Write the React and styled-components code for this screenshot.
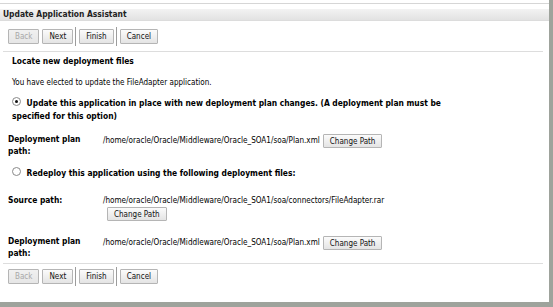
import React from "react";
import styled, { createGlobalStyle } from "styled-components";

const GlobalStyle = createGlobalStyle`
  html, body {
    margin: 0;
    padding: 0;
    background: #ffffff;
  }
  body {
    font-family: "DejaVu Sans Condensed", "Liberation Sans", sans-serif;
    color: #000;
  }
`;

const Frame = styled.div`
  width: 553px;
  height: 307px;
  box-sizing: border-box;
  border-right: 4px solid #9ea39c;
  border-bottom: 5px solid #9ea39c;
  padding-top: 3px;
  overflow: hidden;
`;

const TopRule = styled.div`
  height: 1px;
  background: #d6d6d6;
  margin-bottom: 5px;
`;

const Header = styled.div`
  height: 11px;
  line-height: 11px;
  padding-left: 3px;
  font-size: 8.4px;
  font-weight: bold;
  color: #222;
  background: linear-gradient(#f3f3f3, #e2e2e2);
  border-bottom: 1px solid #dcdcdc;
`;

const ButtonBar = styled.div`
  display: flex;
  align-items: flex-start;
  padding: ${p => p.$pad || "8px 0 0 8px"};
  height: 15px;
`;

const Btn = styled.button`
  font-family: inherit;
  font-size: 8px;
  height: 15px;
  padding: 0 6px;
  margin: 0 ${p => p.$gap ?? 3}px 0 0;
  border: 1px solid #b5b5b5;
  border-radius: 1px;
  background: linear-gradient(#fbfbfb, #e4e4e4);
  color: ${p => (p.disabled ? "#a8a8a8" : "#111")};
  cursor: default;
  ${p => p.disabled && "background: linear-gradient(#f0f0f0, #e6e6e6);"}
`;

const Sep = styled.span`
  width: 1px;
  height: 19px;
  margin-top: -2px;
  background: #9c9c9c;
  margin-right: 3px;
`;

const Rule = styled.div`
  height: 1px;
  background: #dddddd;
  width: 540px;
  margin: ${p => p.$mt}px 0 0 3px;
`;

const Body = styled.div`
  padding: 0 0 0 12px;
`;

const SectionTitle = styled.div`
  font-size: 8.4px;
  font-weight: bold;
  margin-top: 3px;
  height: 12px;
  line-height: 12px;
`;

const Note = styled.div`
  font-size: 8px;
  margin-top: 10px;
  height: 12px;
  line-height: 12px;
`;

const RadioRow = styled.label`
  display: block;
  font-size: 8.4px;
  font-weight: bold;
  line-height: 13px;
  margin-top: ${p => p.$mt || 0}px;
  margin-left: -4px;
  padding-left: 4px;
`;

const Radio = styled.span`
  display: inline-block;
  width: 7px;
  height: 7px;
  border: 1px solid #8a8a8a;
  border-radius: 50%;
  background: #fff;
  margin-right: 3px;
  position: relative;
  vertical-align: 0px;
  &::after {
    content: "";
    display: ${p => (p.$checked ? "block" : "none")};
    position: absolute;
    left: 2px;
    top: 2px;
    width: 3px;
    height: 3px;
    border-radius: 50%;
    background: #111;
  }
`;

const FieldRow = styled.div`
  display: flex;
  margin-top: ${p => p.$mt || 0}px;
  margin-left: -4px;
`;

const FieldLabel = styled.div`
  width: 95px;
  font-size: 8.4px;
  font-weight: bold;
  line-height: 12px;
`;

const FieldValue = styled.div`
  font-size: 8.1px;
  line-height: 12px;
  display: flex;
  flex-direction: ${p => (p.$stack ? "column" : "row")};
  align-items: flex-start;
  gap: 2px;
`;

const PathText = styled.span`
  padding-top: 1px;
  line-height: ${p => (p.$stack ? 10 : 12)}px;
`;

const SmallBtn = styled(Btn)`
  height: 14px;
  margin: ${p => (p.$stack ? "0 0 0 4px" : "1px 0 0 1px")};
  padding: 0 6px;
`;

export default function App() {
  const nav = (
    <>
      <Btn disabled>Back</Btn>
      <Btn $gap={2}>Next</Btn>
      <Sep />
      <Btn $gap={2}>Finish</Btn>
      <Sep />
      <Btn>Cancel</Btn>
    </>
  );
  const plan = "/home/oracle/Oracle/Middleware/Oracle_SOA1/soa/Plan.xml";
  return (
    <Frame>
      <GlobalStyle />
      <TopRule />
      <Header>Update Application Assistant</Header>
      <ButtonBar>{nav}</ButtonBar>
      <Rule $mt={7} />
      <Body>
        <SectionTitle>Locate new deployment files</SectionTitle>
        <Note>You have elected to update the FileAdapter application.</Note>
        <RadioRow $mt={8}>
          <Radio $checked /> Update this application in place with new deployment plan changes. (A deployment plan must be
          <br />
          specified for this option)
        </RadioRow>
        <FieldRow $mt={10}>
          <FieldLabel>
            Deployment plan
            <br />
            path:
          </FieldLabel>
          <FieldValue>
            <PathText>{plan}</PathText>
            <SmallBtn>Change Path</SmallBtn>
          </FieldValue>
        </FieldRow>
        <RadioRow $mt={10}>
          <Radio /> Redeploy this application using the following deployment files:
        </RadioRow>
        <FieldRow $mt={14}>
          <FieldLabel>Source path:</FieldLabel>
          <FieldValue $stack>
            <PathText $stack>/home/oracle/Oracle/Middleware/Oracle_SOA1/soa/connectors/FileAdapter.rar</PathText>
            <SmallBtn $stack>Change Path</SmallBtn>
          </FieldValue>
        </FieldRow>
        <FieldRow $mt={14}>
          <FieldLabel>
            Deployment plan
            <br />
            path:
          </FieldLabel>
          <FieldValue>
            <PathText>{plan}</PathText>
            <SmallBtn>Change Path</SmallBtn>
          </FieldValue>
        </FieldRow>
      </Body>
      <Rule $mt={4} />
      <ButtonBar $pad="5px 0 0 8px">{nav}</ButtonBar>
    </Frame>
  );
}
